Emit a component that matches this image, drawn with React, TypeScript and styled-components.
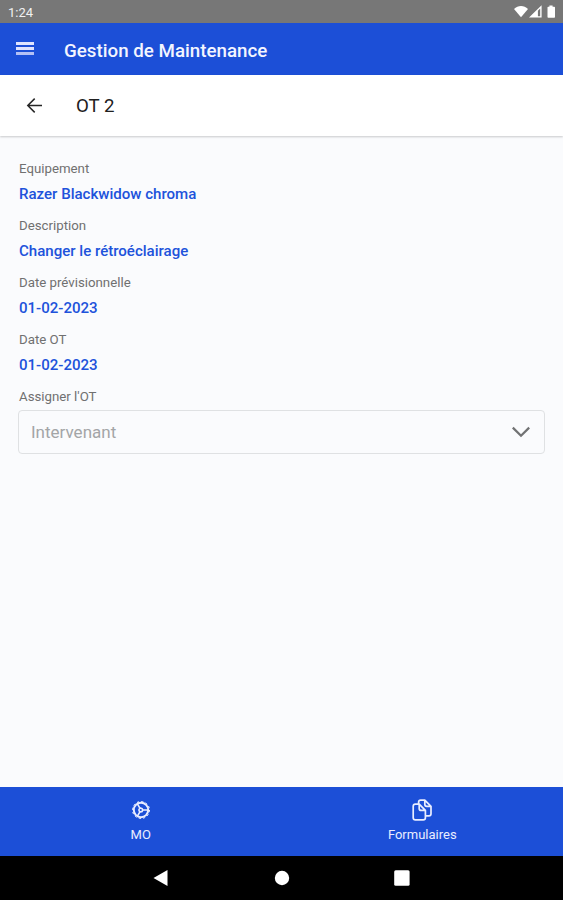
import React from "react";
import styled, { createGlobalStyle } from "styled-components";

const GlobalStyle = createGlobalStyle`
  * { box-sizing: border-box; }
  body { margin: 0; font-family: Roboto, "Liberation Sans", sans-serif; }
`;

const Screen = styled.div`
  display: flex;
  flex-direction: column;
  width: 100%;
  height: 100vh;
  overflow: hidden;
  background: #fafbfd;
`;

const StatusBar = styled.div`
  display: flex;
  align-items: center;
  justify-content: space-between;
  flex: none;
  height: 23px;
  padding: 2px 6px 0 8px;
  background: #777777;
  color: #f1f1f1;
  font-size: 13px;
`;

const StatusIcons = styled.svg`
  display: block;
  width: 44px;
  height: 14px;
  margin-top: -1px;
  fill: #ffffff;
`;

const AppBar = styled.header`
  display: flex;
  align-items: center;
  flex: none;
  height: 52px;
  padding: 2px 16px 0;
  background: #1c4fd7;
`;

const MenuButton = styled.button`
  display: flex;
  flex-direction: column;
  gap: 2px;
  width: 18px;
  margin: 0 30px 3px 0;
  padding: 0;
  border: 0;
  background: none;
`;

const MenuLine = styled.span<{ $color: string }>`
  height: 3px;
  background: ${(p) => p.$color};
`;

const AppTitle = styled.h1`
  margin: 1px 0 0;
  color: #f3f5ff;
  font-size: 18.75px;
  font-weight: 500;
  white-space: nowrap;
`;

const PageHeader = styled.div`
  display: flex;
  align-items: center;
  flex: none;
  height: 61px;
  padding: 1px 25px 0;
  background: #ffffff;
  box-shadow: 0 1px 2px rgba(0, 0, 0, 0.2);
`;

const BackIcon = styled.svg`
  width: 19px;
  height: 19px;
  margin: 0 32px 2px 0;
  fill: none;
  stroke: #262626;
  stroke-width: 1.5;
`;

const PageTitle = styled.h2`
  margin: 0;
  color: #202020;
  font-size: 18.7px;
  font-weight: 400;
`;

const Content = styled.main`
  flex: 1;
  padding: 21px 18px 0 19px;
`;

const Field = styled.div`
  height: 57.1px;
`;

const Label = styled.div`
  height: 24px;
  color: #707070;
  font-size: 13.25px;
  line-height: 23px;
`;

const Value = styled.div`
  color: #2052db;
  font-size: 15.05px;
  font-weight: 500;
  line-height: 26px;
`;

const Select = styled.div`
  display: flex;
  align-items: center;
  justify-content: space-between;
  height: 44px;
  margin-top: 1px;
  margin-left: -1px;
  padding: 0 14px 0 12px;
  border: 1px solid #dfe1e3;
  border-radius: 4px;
  color: #a3a5a7;
  font-size: 17px;
`;

const Chevron = styled.svg`
  width: 18px;
  height: 12px;
  margin-bottom: 1px;
  fill: none;
  stroke: #717273;
  stroke-width: 2.2;
`;

const TabBar = styled.nav`
  display: grid;
  grid-template-columns: 1fr 1fr;
  flex: none;
  height: 69px;
  background: #1c4fd7;
  color: #e9edff;
`;

const Tab = styled.div`
  display: flex;
  flex-direction: column;
  align-items: center;
  padding-top: 11px;
  font-size: 13px;
  line-height: 16px;
`;

const TabIcon = styled.svg`
  width: 24px;
  height: 24px;
  margin-bottom: 5px;
  fill: none;
  stroke: currentColor;
  stroke-linejoin: round;
`;

const SystemBar = styled.div`
  display: flex;
  align-items: center;
  justify-content: space-between;
  flex: none;
  height: 44px;
  padding: 0 153px;
  background: #000000;
`;

const SystemIcon = styled.svg`
  width: 16px;
  height: 16px;
  fill: #ffffff;
`;

const fields = [
  { label: "Equipement", value: "Razer Blackwidow chroma" },
  { label: "Description", value: "Changer le rétroéclairage" },
  { label: "Date prévisionnelle", value: "01-02-2023" },
  { label: "Date OT", value: "01-02-2023" },
];

export default function App() {
  return (
    <Screen>
      <GlobalStyle />
      <StatusBar>
        <span>1:24</span>
        <StatusIcons viewBox="0 0 44 14">
          <path d="M1 4C5-.1 11-.1 15 4L8 12.3Z" />
          <path fillRule="evenodd" d="M16 12.5 28.6.2V12.5ZM24.9 5.8V11.2H27.2V3.5Z" />
          <path d="M34.5 2.3Q34.5 1.7 35.2 1.7H36.4V.5H39.6V1.7H41.2Q42 1.7 42 2.4V12Q42 12.7 41.2 12.7H35.3Q34.5 12.7 34.5 12Z" />
        </StatusIcons>
      </StatusBar>
      <AppBar>
        <MenuButton aria-label="Menu">
          <MenuLine $color="#dfe4ff" />
          <MenuLine $color="#dfe3ff" />
          <MenuLine $color="#b4c1f5" />
        </MenuButton>
        <AppTitle>Gestion de Maintenance</AppTitle>
      </AppBar>
      <PageHeader>
        <BackIcon viewBox="0 0 19 19">
          <path d="M17 9.5H3M9.7 2.6 2.8 9.5l6.9 6.9" />
        </BackIcon>
        <PageTitle>OT 2</PageTitle>
      </PageHeader>
      <Content>
        {fields.map((f) => (
          <Field key={f.label}>
            <Label>{f.label}</Label>
            <Value>{f.value}</Value>
          </Field>
        ))}
        <Label>Assigner l'OT</Label>
        <Select>
          Intervenant
          <Chevron viewBox="0 0 18 12">
            <path d="M.8 1.6 9 9.8l8.2-8.2" />
          </Chevron>
        </Select>
      </Content>
      <TabBar>
        <Tab>
          <TabIcon viewBox="0 0 24 24">
            <circle cx="12" cy="12" r="7.2" strokeWidth="2" />
            <circle cx="12" cy="12" r="8.5" strokeWidth="1" strokeDasharray="2.225 2.225" />
            <path d="M13.8 12H19M10.9 10.2 8.4 5.8M10.9 13.8l-2.5 4.4M10.9 10.2Q8.9 12 10.9 13.8M10.9 10.2Q13.4 9.8 13.8 12 13.4 14.2 10.9 13.8" strokeWidth="1.6" />
          </TabIcon>
          MO
        </Tab>
        <Tab>
          <TabIcon viewBox="0 0 24 24">
            <path d="M9.2 6.2H5.3Q3.2 6.2 3.2 8.3V19.8Q3.2 21.9 5.3 21.9H13.3Q15.4 21.9 15.4 19.8V12.4L9.2 6.2V10.4Q9.2 12.4 11.2 12.4H15.4" strokeWidth="1.7" />
            <path d="M8.6 6V4.2Q8.6 2.1 10.7 2.1H14.8L21 8.3V15.7Q21 17.8 18.9 17.8H15.5M14.8 2.1V6.3Q14.8 8.3 16.8 8.3H21" strokeWidth="1.7" />
          </TabIcon>
          Formulaires
        </Tab>
      </TabBar>
      <SystemBar>
        <SystemIcon viewBox="0 0 16 16"><path d="M.5 8 14.5 0V16Z" /></SystemIcon>
        <SystemIcon viewBox="0 0 16 16"><circle cx="8" cy="8" r="7.2" /></SystemIcon>
        <SystemIcon viewBox="0 0 16 16"><rect x=".2" y=".3" width="15.4" height="15.4" rx="1.5" /></SystemIcon>
      </SystemBar>
    </Screen>
  );
}
